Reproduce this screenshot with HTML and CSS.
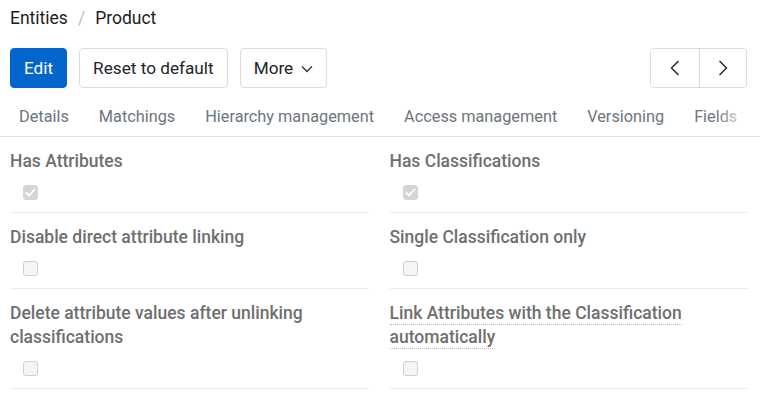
FILE: index.html
```html
<!DOCTYPE html>
<html lang="en">
<head>
<meta charset="utf-8">
<title>Entities / Product</title>
<link rel="stylesheet" href="styles.css">
</head>
<body>
<div class="header">
  <div class="breadcrumb">
    <span class="crumb">Entities</span>
    <span class="crumb-sep">/</span>
    <span class="crumb current">Product</span>
  </div>
  <div class="toolbar">
    <div class="actions">
      <button class="btn btn-primary">Edit</button>
      <button class="btn">Reset to default</button>
      <button class="btn btn-more">More
        <svg class="chev-down" width="12" height="8" viewBox="0 0 12 8"><path d="M1 1.5 L6 6.5 L11 1.5" fill="none" stroke="#333" stroke-width="1.3"/></svg>
      </button>
    </div>
    <div class="pager">
      <button class="pager-btn" aria-label="Previous">
        <svg width="10" height="16" viewBox="0 0 10 16"><path d="M8.5 1 L1.5 8 L8.5 15" fill="none" stroke="#222" stroke-width="1.4"/></svg>
      </button>
      <button class="pager-btn" aria-label="Next">
        <svg width="10" height="16" viewBox="0 0 10 16"><path d="M1.5 1 L8.5 8 L1.5 15" fill="none" stroke="#222" stroke-width="1.4"/></svg>
      </button>
    </div>
  </div>
</div>
<nav class="tabs">
  <a class="tab">Details</a>
  <a class="tab">Matchings</a>
  <a class="tab">Hierarchy management</a>
  <a class="tab">Access management</a>
  <a class="tab">Versioning</a>
  <a class="tab">Fields</a>
  <div class="tabs-fade"></div>
</nav>
<div class="fields">
  <div class="field">
    <div class="label">Has Attributes</div>
    <div class="check-row"><span class="checkbox checked"><svg width="11" height="9" viewBox="0 0 11 9"><path d="M1 4.5 L4 7.5 L10 1" fill="none" stroke="#fff" stroke-width="1.8"/></svg></span></div>
  </div>
  <div class="field">
    <div class="label">Has Classifications</div>
    <div class="check-row"><span class="checkbox checked"><svg width="11" height="9" viewBox="0 0 11 9"><path d="M1 4.5 L4 7.5 L10 1" fill="none" stroke="#fff" stroke-width="1.8"/></svg></span></div>
  </div>
  <div class="field">
    <div class="label">Disable direct attribute linking</div>
    <div class="check-row"><span class="checkbox"></span></div>
  </div>
  <div class="field">
    <div class="label">Single Classification only</div>
    <div class="check-row"><span class="checkbox"></span></div>
  </div>
  <div class="field">
    <div class="label">Delete attribute values after unlinking classifications</div>
    <div class="check-row"><span class="checkbox"></span></div>
  </div>
  <div class="field">
    <div class="label"><span class="hint">Link Attributes with the Classification automatically</span></div>
    <div class="check-row"><span class="checkbox"></span></div>
  </div>
</div>
</body>
</html>
```
FILE: styles.css
```css
* { box-sizing: border-box; }
html, body { margin: 0; padding: 0; background: #fff; }
body {
  font-family: Roboto, "Liberation Sans", Arial, sans-serif;
  font-size: 16px;
  line-height: 24px;
  color: #212529;
  width: 760px;
  height: 403px;
  overflow: hidden;
}
.header { padding: 6px 13px 0 10px; }
.breadcrumb { display: flex; align-items: center; gap: 9px; height: 24px; font-size: 17.5px; }
.crumb { color: #1d1d1f; }
.crumb-sep { color: #b8bec4; margin: 0 1px; }
.toolbar {
  margin-top: 18px;
  display: flex;
  justify-content: space-between;
  align-items: center;
}
.actions { display: flex; gap: 12px; }
.btn {
  height: 40px;
  padding: 0 13px;
  border: 1px solid #dcdcdc;
  border-radius: 4px;
  background: #fff;
  color: #212529;
  font-family: inherit;
  font-size: 17.2px;
  display: flex;
  align-items: center;
  gap: 8px;
}
.btn-primary {
  background: #0466cc;
  border-color: #0466cc;
  color: #fff;
}
.chev-down { margin-top: 1px; }
.pager {
  display: flex;
  border: 1px solid #dcdcdc;
  border-radius: 4px;
  height: 40px;
}
.pager-btn {
  width: 48px;
  height: 38px;
  border: 0;
  background: #fff;
  display: flex;
  align-items: center;
  justify-content: center;
  padding: 0;
  border-radius: 4px;
}
.pager-btn + .pager-btn { border-left: 1px solid #dcdcdc; border-radius: 0 4px 4px 0; width: 47px; }
.tabs {
  position: relative;
  display: flex;
  padding: 17px 0 7px 4px;
  border-bottom: 1px solid #dee2e6;
  white-space: nowrap;
  overflow: hidden;
}
.tab {
  padding: 0 15px;
  color: #6c757d;
  line-height: 24px;
  font-size: 16.3px;
}
.tabs-fade {
  position: absolute;
  right: 0;
  top: 0;
  bottom: 0;
  width: 44px;
  background: linear-gradient(to right, rgba(255,255,255,0), #fff 80%);
}
.fields {
  display: grid;
  grid-template-columns: 1fr 1fr;
  column-gap: 21px;
  padding: 0 12px 0 10px;
}
.field {
  padding: 12px 0 12px;
  border-bottom: 1px solid #ececec;
}
.label {
  color: #6f6f6f;
  font-weight: 500;
  line-height: 24px;
  font-size: 17.5px;
}
.hint {
  border-bottom: 1px dotted #b5b5b5;
  padding-bottom: 1px;
}
.check-row {
  margin-top: 12px;
  height: 15px;
  padding-left: 13px;
  display: flex;
}
.checkbox {
  width: 15px;
  height: 15px;
  border: 1px solid #cfcfcf;
  background: #f5f5f5;
  border-radius: 3px;
  display: flex;
  align-items: center;
  justify-content: center;
}
.checkbox.checked {
  background: #d5d5d5;
  border-color: #d5d5d5;
}
```
